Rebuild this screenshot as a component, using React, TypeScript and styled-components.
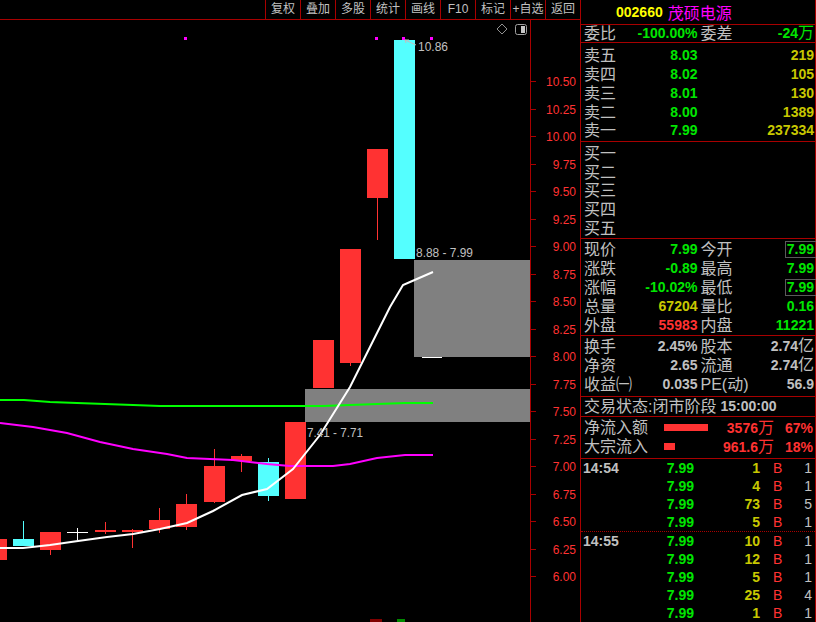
import React from "react";
import styled, { createGlobalStyle } from "styled-components";

const LINE = "#a80000";
const GREY = "#c0c0c0";
const GREEN = "#00e600";
const RED = "#ff3232";
const YELLOW = "#c8c800";
const CYAN = "#54ffff";
const MAGENTA = "#ff00ff";

const GlobalStyle = createGlobalStyle`
  html, body {
    margin: 0;
    padding: 0;
    background: #000;
  }
  body {
    font-family: "Liberation Sans", "Noto Sans CJK SC", sans-serif;
  }
`;

const Screen = styled.div`
  width: 816px;
  height: 622px;
  display: flex;
  background: #000;
  overflow: hidden;
`;

const Left = styled.div`
  width: 580px;
  display: flex;
  flex-direction: column;
`;

const Toolbar = styled.div`
  height: 19px;
  border-bottom: 1px solid ${LINE};
  display: flex;
  justify-content: flex-end;
`;

const ToolButton = styled.div`
  width: 35px;
  box-sizing: border-box;
  border-left: 1px solid ${LINE};
  color: ${GREY};
  font-size: 12px;
  line-height: 19px;
  text-align: center;
  white-space: nowrap;
`;

const ChartRow = styled.div`
  flex: 1;
  display: flex;
`;

const ChartCanvas = styled.svg`
  display: block;
  width: 530px;
  height: 602px;
`;

const Axis = styled.div`
  width: 50px;
  box-sizing: border-box;
  border-left: 1px solid ${LINE};
`;

const AxisCanvas = styled.svg`
  display: block;
  width: 49px;
  height: 602px;
`;

const Quote = styled.div`
  width: 236px;
  box-sizing: border-box;
  border-left: 1px solid ${LINE};
  border-right: 1px solid ${LINE};
  display: flex;
  flex-direction: column;
`;

const Header = styled.div`
  height: 25px;
  border-bottom: 1px solid ${LINE};
  display: flex;
  align-items: center;
  gap: 5px;
  padding-left: 35px;
`;

const Code = styled.span`
  color: #ffff00;
  font-size: 14px;
  font-weight: bold;
`;

const Name = styled.span`
  color: ${MAGENTA};
  font-size: 16px;
  line-height: 19px;
  font-family: "Noto Sans CJK SC", sans-serif;
`;

const Section = styled.div<{ $pt?: number; $pb?: number; $dotted?: boolean; $last?: boolean }>`
  padding-top: ${(p) => p.$pt ?? 0}px;
  padding-bottom: ${(p) => p.$pb ?? 0}px;
  border-bottom: ${(p) => (p.$last ? "none" : `1px ${p.$dotted ? "dotted" : "solid"} ${LINE}`)};
  display: flex;
  flex-direction: column;
`;

const Row = styled.div<{ $h: number }>`
  height: ${(p) => p.$h}px;
  display: grid;
  grid-template-columns: 1fr 1fr;
  column-gap: 3px;
  padding: 0 1px 0 3px;
`;

const Cell = styled.div<{ $end?: boolean }>`
  display: flex;
  align-items: center;
  justify-content: ${(p) => (p.$end ? "flex-end" : "space-between")};
  white-space: nowrap;
`;

const Label = styled.span`
  color: ${GREY};
  font-size: 16px;
  line-height: 17px;
  font-family: "Liberation Sans", "Noto Sans CJK SC", sans-serif;
`;

const Value = styled.span<{ $c: string; $boxed?: boolean }>`
  color: ${(p) => p.$c};
  font-size: 14px;
  font-weight: bold;
  line-height: ${(p) => (p.$boxed ? "15px" : "17px")};
  border: ${(p) => (p.$boxed ? "1px solid #5a5a5a" : "none")};
  padding: ${(p) => (p.$boxed ? "0 2px 0 1px" : "0")};
  margin-right: ${(p) => (p.$boxed ? "-3px" : "0")};
`;

const Unit = styled.span`
  font-size: 16px;
  line-height: 1;
  font-weight: normal;
  font-family: "Liberation Sans", "Noto Sans CJK SC", sans-serif;
`;

const StatusRow = styled.div`
  height: 19px;
  display: flex;
  align-items: center;
  gap: 4px;
  padding-left: 3px;
`;

const FlowRow = styled.div`
  height: 19px;
  display: grid;
  grid-template-columns: 80px 56px 54px 39px;
  align-items: center;
  padding: 0 1px 0 3px;
  white-space: nowrap;
`;

const Bar = styled.div<{ $w: number }>`
  width: ${(p) => p.$w}px;
  height: 7px;
  background: ${RED};
`;

const Right = styled.div`
  text-align: right;
  line-height: 17px;
`;

const TradeRow = styled.div`
  height: 18px;
  display: grid;
  grid-template-columns: 57px 54px 66px 30px 22px;
  align-items: center;
  padding: 0 2px;
  white-space: nowrap;
`;

const TradeTime = styled.span`
  color: ${GREY};
  font-size: 14px;
  font-weight: bold;
`;

const TradeNum = styled.span<{ $c: string }>`
  color: ${(p) => p.$c};
  font-size: 14px;
  font-weight: bold;
  text-align: right;
`;

const Side = styled.span`
  color: ${RED};
  font-size: 14px;
  padding-left: 13px;
`;

const Count = styled.span`
  color: ${GREY};
  font-size: 14px;
  text-align: right;
`;

type Candle = { x: number; top: number; bottom: number; hi: number; lo: number; color: string };

const candles: Candle[] = [
  { x: -14, top: 539, bottom: 560, hi: 539, lo: 560, color: RED },
  { x: 13, top: 539, bottom: 546, hi: 521, lo: 546, color: CYAN },
  { x: 40, top: 532, bottom: 550, hi: 532, lo: 555, color: RED },
  { x: 67, top: 532, bottom: 533, hi: 528, lo: 540, color: "#ffffff" },
  { x: 95, top: 530, bottom: 532, hi: 522, lo: 534, color: RED },
  { x: 122, top: 530, bottom: 532, hi: 529, lo: 548, color: RED },
  { x: 149, top: 520, bottom: 529, hi: 508, lo: 533, color: RED },
  { x: 176, top: 504, bottom: 527, hi: 494, lo: 530, color: RED },
  { x: 204, top: 466, bottom: 502, hi: 449, lo: 503, color: RED },
  { x: 231, top: 456, bottom: 461, hi: 454, lo: 472, color: RED },
  { x: 258, top: 462, bottom: 496, hi: 458, lo: 501, color: CYAN },
  { x: 285, top: 422, bottom: 499, hi: 422, lo: 499, color: RED },
  { x: 313, top: 340, bottom: 388, hi: 340, lo: 388, color: RED },
  { x: 340, top: 249, bottom: 363, hi: 249, lo: 366, color: RED },
  { x: 367, top: 149, bottom: 198, hi: 149, lo: 240, color: RED },
  { x: 394, top: 40, bottom: 259, hi: 40, lo: 259, color: CYAN },
];

const ma5 = "0,548 23,548 50,545 78,541 107,537 133,534 160,529 187,523 213,511 242,495 267,489 293,469 320,435 340,403 350,387 370,347 380,327 390,307 403,285 410,282 433,272";
const ma60 = "0,400 24,400 50,402 77,403 105,404 133,405 160,406 242,406 290,406 323,406 350,405 377,404 405,403 433,403";
const ma20 = "0,423 33,427 67,433 100,442 133,449 167,454 187,458 233,460 267,464 290,466 333,466 350,464 377,458 405,455 433,455";

const priceY = (p: number) => 136 + (10 - p) * 110;
const ticks = [10.5, 10.25, 10, 9.75, 9.5, 9.25, 9, 8.75, 8.5, 8.25, 8, 7.75, 7.5, 7.25, 7, 6.75, 6.5, 6.25, 6];

function KChart() {
  return (
    <ChartCanvas viewBox="0 20 530 602">
      <rect x={414} y={260} width={116} height={97} fill="#808080" />
      <rect x={305} y={389} width={225} height={33} fill="#808080" />
      <line x1={422} y1={357.5} x2={442} y2={357.5} stroke="#ffffff" />
      {candles.map((c, i) => (
        <g key={i}>
          <line x1={c.x + 10.5} y1={c.hi} x2={c.x + 10.5} y2={c.lo} stroke={c.color} />
          <rect x={c.x} y={c.top} width={21} height={c.bottom - c.top} fill={c.color} />
        </g>
      ))}
      <polyline points={ma60} fill="none" stroke="#00ff00" strokeWidth={2} />
      <polyline points={ma20} fill="none" stroke={MAGENTA} strokeWidth={2} />
      <polyline points={ma5} fill="none" stroke="#ffffff" strokeWidth={2} />
      {[184, 375, 402, 430].map((x) => (
        <rect key={x} x={x} y={37} width={3} height={3} fill={MAGENTA} />
      ))}
      <line x1={405} y1={40} x2={416} y2={45} stroke={GREY} />
      <line x1={405} y1={40} x2={409} y2={40} stroke={GREY} />
      <line x1={405} y1={40} x2={406} y2={43} stroke={GREY} />
      <text x={418} y={51} fill={GREY} fontSize={13} textLength={30} lengthAdjust="spacingAndGlyphs">10.86</text>
      <text x={416} y={257} fill={GREY} fontSize={13} textLength={57} lengthAdjust="spacingAndGlyphs">8.88 - 7.99</text>
      <text x={307} y={437} fill={GREY} fontSize={13} textLength={56} lengthAdjust="spacingAndGlyphs">7.41 - 7.71</text>
      <polygon points="502,24 507,29 502,34 497,29" fill="none" stroke="#909090" />
      <rect x={515.5} y={24.5} width={11} height={10} rx={2} fill="none" stroke="#a0a0a0" />
      <rect x={521} y={26} width={4} height={7} fill="#c8c8c8" />
      <rect x={370} y={619} width={12} height={3} fill="#800000" />
      <rect x={397} y={619} width={8} height={3} fill="#008a00" />
    </ChartCanvas>
  );
}

function PriceAxis() {
  return (
    <Axis>
      <AxisCanvas viewBox="531 20 49 602">
        {ticks.map((p) => {
          const y = Math.round(priceY(p)) + 0.5;
          return (
            <g key={p}>
              <line x1={531} y1={y} x2={536} y2={y} stroke={LINE} />
              <text x={576} y={y + 4.5} fill={RED} fontSize={12} textAnchor="end">
                {p.toFixed(2)}
              </text>
            </g>
          );
        })}
      </AxisCanvas>
    </Axis>
  );
}

const sells = [
  ["卖五", "8.03", "219"],
  ["卖四", "8.02", "105"],
  ["卖三", "8.01", "130"],
  ["卖二", "8.00", "1389"],
  ["卖一", "7.99", "237334"],
];

const buys = ["买一", "买二", "买三", "买四", "买五"];

const trades1 = [
  ["14:54", "1", "1"],
  ["", "4", "1"],
  ["", "73", "5"],
  ["", "5", "1"],
];

const trades2 = [
  ["14:55", "10", "1"],
  ["", "12", "1"],
  ["", "5", "1"],
  ["", "25", "4"],
  ["", "1", "1"],
];

function Trades({ rows }: { rows: string[][] }) {
  return (
    <>
      {rows.map(([t, vol, n], i) => (
        <TradeRow key={i}>
          <TradeTime>{t}</TradeTime>
          <TradeNum $c={GREEN}>7.99</TradeNum>
          <TradeNum $c={YELLOW}>{vol}</TradeNum>
          <Side>B</Side>
          <Count>{n}</Count>
        </TradeRow>
      ))}
    </>
  );
}

export default function App() {
  return (
    <Screen>
      <GlobalStyle />
      <Left>
        <Toolbar>
          {["复权", "叠加", "多股", "统计", "画线", "F10", "标记", "+自选", "返回"].map((t) => (
            <ToolButton key={t}>{t}</ToolButton>
          ))}
        </Toolbar>
        <ChartRow>
          <KChart />
          <PriceAxis />
        </ChartRow>
      </Left>
      <Quote>
        <Header>
          <Code>002660</Code>
          <Name>茂硕电源</Name>
        </Header>
        <Section>
          <Row $h={17}>
            <Cell>
              <Label>委比</Label>
              <Value $c={GREEN}>-100.00%</Value>
            </Cell>
            <Cell>
              <Label>委差</Label>
              <Value $c={GREEN}>-24<Unit>万</Unit></Value>
            </Cell>
          </Row>
        </Section>
        <Section $pt={3.3} $pb={0.7}>
          {sells.map(([l, p, v]) => (
            <Row key={l} $h={18.8}>
              <Cell>
                <Label>{l}</Label>
                <Value $c={GREEN}>{p}</Value>
              </Cell>
              <Cell $end>
                <Value $c={YELLOW}>{v}</Value>
              </Cell>
            </Row>
          ))}
        </Section>
        <Section $pt={2.3} $pb={0.7}>
          {buys.map((l) => (
            <Row key={l} $h={18.6}>
              <Cell>
                <Label>{l}</Label>
              </Cell>
              <Cell />
            </Row>
          ))}
        </Section>
        <Section $pt={1}>
          <Row $h={19}>
            <Cell><Label>现价</Label><Value $c={GREEN}>7.99</Value></Cell>
            <Cell><Label>今开</Label><Value $c={GREEN} $boxed>7.99</Value></Cell>
          </Row>
          <Row $h={19}>
            <Cell><Label>涨跌</Label><Value $c={GREEN}>-0.89</Value></Cell>
            <Cell><Label>最高</Label><Value $c={GREEN}>7.99</Value></Cell>
          </Row>
          <Row $h={19}>
            <Cell><Label>涨幅</Label><Value $c={GREEN}>-10.02%</Value></Cell>
            <Cell><Label>最低</Label><Value $c={GREEN} $boxed>7.99</Value></Cell>
          </Row>
          <Row $h={19}>
            <Cell><Label>总量</Label><Value $c={YELLOW}>67204</Value></Cell>
            <Cell><Label>量比</Label><Value $c={GREEN}>0.16</Value></Cell>
          </Row>
          <Row $h={19}>
            <Cell><Label>外盘</Label><Value $c={RED}>55983</Value></Cell>
            <Cell><Label>内盘</Label><Value $c={GREEN}>11221</Value></Cell>
          </Row>
        </Section>
        <Section $pt={1} $pb={2}>
          <Row $h={19}>
            <Cell><Label>换手</Label><Value $c={GREY}>2.45%</Value></Cell>
            <Cell><Label>股本</Label><Value $c={GREY}>2.74<Unit>亿</Unit></Value></Cell>
          </Row>
          <Row $h={19}>
            <Cell><Label>净资</Label><Value $c={GREY}>2.65</Value></Cell>
            <Cell><Label>流通</Label><Value $c={GREY}>2.74<Unit>亿</Unit></Value></Cell>
          </Row>
          <Row $h={19}>
            <Cell><Label>收益㈠</Label><Value $c={GREY}>0.035</Value></Cell>
            <Cell><Label>PE(动)</Label><Value $c={GREY}>56.9</Value></Cell>
          </Row>
        </Section>
        <Section>
          <StatusRow>
            <Label>交易状态:闭市阶段</Label>
            <Value $c={GREY}>15:00:00</Value>
          </StatusRow>
        </Section>
        <Section $pt={1} $pb={2}>
          <FlowRow>
            <Label>净流入额</Label>
            <Bar $w={44} />
            <Right><Value $c={RED}>3576<Unit>万</Unit></Value></Right>
            <Right><Value $c={RED}>67%</Value></Right>
          </FlowRow>
          <FlowRow>
            <Label>大宗流入</Label>
            <Bar $w={11} />
            <Right><Value $c={RED}>961.6<Unit>万</Unit></Value></Right>
            <Right><Value $c={RED}>18%</Value></Right>
          </FlowRow>
        </Section>
        <Section $dotted>
          <Trades rows={trades1} />
        </Section>
        <Section $last>
          <Trades rows={trades2} />
        </Section>
      </Quote>
    </Screen>
  );
}
